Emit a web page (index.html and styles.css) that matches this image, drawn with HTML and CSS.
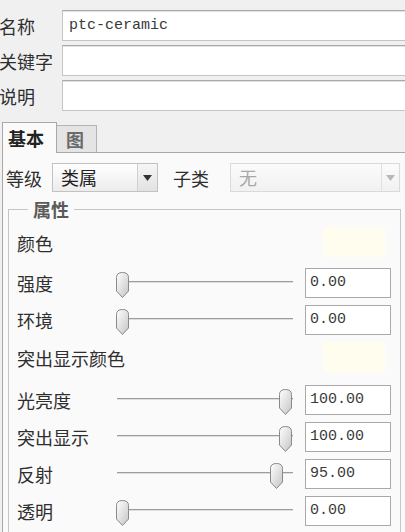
FILE: index.html
```html
<!DOCTYPE html>
<html lang="zh">
<head>
<meta charset="utf-8">
<title>材料属性</title>
<link rel="stylesheet" href="styles.css">
</head>
<body>
<div class="app">
  <div class="fields">
    <div class="field"><span class="flabel">名称</span><div class="tinput">ptc-ceramic</div></div>
    <div class="field"><span class="flabel">关键字</span><div class="tinput"></div></div>
    <div class="field"><span class="flabel">说明</span><div class="tinput"></div></div>
  </div>
  <div class="tabs">
    <div class="tab active">基本</div>
    <div class="tab">图</div>
  </div>
  <div class="panel">
    <div class="classrow">
      <span class="lbl">等级</span>
      <div class="combo">
        <span class="combo-text">类属</span>
        <span class="combo-arrow"><svg width="9" height="6" viewBox="0 0 9 6"><path d="M0 0 H9 L4.5 6 Z" fill="#333"/></svg></span>
      </div>
      <span class="lbl sub">子类</span>
      <div class="combo disabled">
        <span class="combo-text">无</span>
        <span class="combo-arrow"><svg width="9" height="6" viewBox="0 0 9 6"><path d="M0 0 H9 L4.5 6 Z" fill="#b8b8b8"/></svg></span>
      </div>
    </div>
    <fieldset class="group">
      <legend>属性</legend>
      <div class="prow color-row"><span class="plabel">颜色</span><span class="swatch"></span></div>
      <div class="prow"><span class="plabel">强度</span>
        <div class="slider"><div class="track"></div>
          <svg class="thumb" style="left:0px" width="15" height="26" viewBox="0 0 15 26"><use href="#thumbshape"/></svg>
        </div>
        <div class="num">0.00</div></div>
      <div class="prow"><span class="plabel">环境</span>
        <div class="slider"><div class="track"></div>
          <svg class="thumb" style="left:0px" width="15" height="26" viewBox="0 0 15 26"><use href="#thumbshape"/></svg>
        </div>
        <div class="num">0.00</div></div>
      <div class="prow color-row tall"><span class="plabel">突出显示颜色</span><span class="swatch"></span></div>
      <div class="prow"><span class="plabel">光亮度</span>
        <div class="slider"><div class="track"></div>
          <svg class="thumb" style="left:163px" width="15" height="26" viewBox="0 0 15 26"><use href="#thumbshape"/></svg>
        </div>
        <div class="num">100.00</div></div>
      <div class="prow"><span class="plabel">突出显示</span>
        <div class="slider"><div class="track"></div>
          <svg class="thumb" style="left:163px" width="15" height="26" viewBox="0 0 15 26"><use href="#thumbshape"/></svg>
        </div>
        <div class="num">100.00</div></div>
      <div class="prow"><span class="plabel">反射</span>
        <div class="slider"><div class="track"></div>
          <svg class="thumb" style="left:154px" width="15" height="26" viewBox="0 0 15 26"><use href="#thumbshape"/></svg>
        </div>
        <div class="num">95.00</div></div>
      <div class="prow"><span class="plabel">透明</span>
        <div class="slider"><div class="track"></div>
          <svg class="thumb" style="left:0px" width="15" height="26" viewBox="0 0 15 26"><use href="#thumbshape"/></svg>
        </div>
        <div class="num">0.00</div></div>
    </fieldset>
  </div>
</div>
<svg class="defs" width="0" height="0">
  <defs>
    <linearGradient id="tg" x1="0" y1="0" x2="1" y2="1">
      <stop offset="0" stop-color="#ffffff"/>
      <stop offset="1" stop-color="#c4c4c4"/>
    </linearGradient>
    <path id="thumbshape" d="M1.5 5.5 Q1.5 0.5 7.5 0.5 Q13.5 0.5 13.5 5.5 L13.5 19 L7.5 25.5 L1.5 19 Z" fill="url(#tg)" stroke="#8a8a8a" stroke-width="1"/>
  </defs>
</svg>
</body>
</html>
```
FILE: styles.css
```css
html, body {
  margin: 0;
  padding: 0;
}
body {
  width: 405px;
  height: 532px;
  overflow: hidden;
  background: #f0f0f0;
  font-family: "Noto Sans CJK SC", "Noto Sans", sans-serif;
  color: #2e2e2e;
}
.defs {
  position: absolute;
  width: 0;
  height: 0;
}
.app {
  display: flex;
  flex-direction: column;
}
.fields {
  display: flex;
  flex-direction: column;
  gap: 4px;
  padding-top: 10px;
}
.field {
  display: flex;
  align-items: center;
}
.flabel {
  width: 63px;
  flex: none;
  font-size: 18px;
  line-height: 20px;
  margin-left: -1px;
}
.tinput {
  flex: none;
  width: 360px;
  height: 31px;
  box-sizing: border-box;
  background: #fff;
  border: 1px solid #c4c4c4;
  border-top-color: #a9a9a9;
  box-shadow: inset 0 1px 0 #e2e2e2;
  font-family: "Liberation Mono", monospace;
  font-size: 15px;
  line-height: 29px;
  padding-left: 6px;
  color: #3a3a3a;
}
.tabs {
  display: flex;
  align-items: flex-end;
  margin-top: 11px;
  margin-left: 2px;
  height: 30px;
}
.tab {
  box-sizing: border-box;
  font-size: 18px;
  line-height: 20px;
  font-weight: bold;
}
.tab.active {
  position: relative;
  z-index: 1;
  width: 55px;
  height: 31px;
  margin-bottom: -1px;
  background: #fafafa;
  border: 1px solid #a8a8a8;
  border-bottom: none;
  padding: 5px 0 0 5px;
  color: #222;
}
.tab:not(.active) {
  width: 40px;
  height: 27px;
  background: #e4e4e4;
  border: 1px solid #b4b4b4;
  border-left: none;
  border-bottom: none;
  padding: 3px 0 0 9px;
  color: #6a6a6a;
}
.panel {
  margin-left: 2px;
  border-top: 1px solid #a8a8a8;
  border-left: 1px solid #a8a8a8;
  background: #fafafa;
  height: 400px;
}
.classrow {
  display: flex;
  align-items: center;
  padding: 10px 0 0 3px;
}
.lbl {
  font-size: 18px;
  line-height: 20px;
  margin-right: 10px;
}
.lbl.sub {
  margin-left: 15px;
  margin-right: 21px;
}
.combo {
  display: flex;
  box-sizing: border-box;
  width: 106px;
  height: 29px;
  border: 1px solid #c2c2c2;
  background: linear-gradient(#ffffff, #ececec);
}
.combo-text {
  flex: 1;
  font-size: 18px;
  line-height: 27px;
  padding-left: 8px;
  color: #222;
}
.combo-arrow {
  width: 19px;
  flex: none;
  display: flex;
  align-items: center;
  justify-content: center;
  border-left: 1px solid #cfcfcf;
  background: linear-gradient(#f6f6f6, #e2e2e2);
}
.combo.disabled {
  width: 170px;
  border-color: #dadada;
  background: linear-gradient(#fbfbfb, #f1f1f1);
}
.combo.disabled .combo-text {
  color: #a8a8a8;
}
.combo.disabled .combo-arrow {
  width: 17px;
  border-left-color: #e0e0e0;
  background: none;
}
.group {
  box-sizing: border-box;
  width: 393px;
  margin: 7px 0 0 5px;
  padding: 8px 9px 0 8px;
  border: 1px solid #c6c6c6;
  min-width: 0;
}
.group legend {
  margin-left: 11px;
  padding: 0 5px;
  font-size: 18px;
  line-height: 20px;
  font-weight: bold;
  color: #5a5a5a;
}
.prow {
  display: flex;
  align-items: center;
  height: 30px;
  margin-bottom: 7px;
}
.prow.color-row {
  height: 34px;
  align-items: flex-start;
}
.prow.color-row.tall {
  height: 36px;
}
.color-row .plabel {
  margin-top: 6px;
}
.plabel {
  width: 98px;
  flex: none;
  font-size: 18px;
  line-height: 20px;
  white-space: nowrap;
}
.swatch {
  margin-left: auto;
  margin-right: 6px;
  width: 62px;
  height: 30px;
  background: #fffeee;
}
.slider {
  position: relative;
  width: 178px;
  height: 30px;
  flex: none;
}
.track {
  position: absolute;
  left: 2px;
  right: 0;
  top: 13px;
  height: 1px;
  background: #9c9c9c;
  border-bottom: 1px solid #dedede;
}
.thumb {
  position: absolute;
  top: 4px;
}
.num {
  margin-left: 12px;
  width: 86px;
  height: 30px;
  box-sizing: border-box;
  flex: none;
  border: 1px solid #a9a9a9;
  background: #fff;
  font-family: "Liberation Mono", monospace;
  font-size: 15px;
  line-height: 28px;
  padding-left: 4px;
  color: #3a3a3a;
}
```
